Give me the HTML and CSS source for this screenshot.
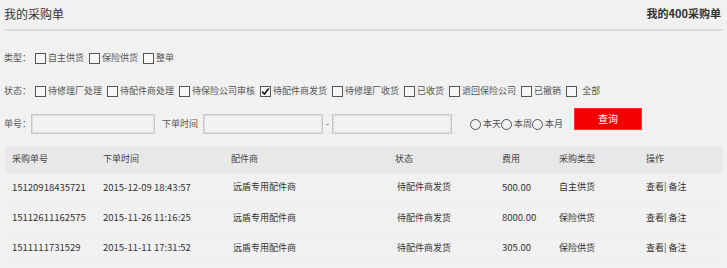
FILE: index.html
```html
<!DOCTYPE html>
<html lang="zh-CN">
<head>
    <meta charset="UTF-8">
    <title>我的采购单</title>
    <link rel="stylesheet" href="styles.css">
</head>
<body>
<div class="page">
    <div class="head">
        <h2>我的采购单</h2>
        <a class="link-400" href="javascript:;">我的400采购单</a>
    </div>

    <div class="row row-type">
        <span class="lbl">类型：</span>
        <label class="chk"><span class="box"></span>自主供货</label>
        <label class="chk"><span class="box"></span>保险供货</label>
        <label class="chk"><span class="box"></span>整单</label>
    </div>

    <div class="row row-state">
        <span class="lbl">状态：</span>
        <label class="chk"><span class="box"></span>待修理厂处理</label>
        <label class="chk"><span class="box"></span>待配件商处理</label>
        <label class="chk"><span class="box"></span>待保险公司审核</label>
        <label class="chk"><span class="box on"><svg width="9" height="9" viewBox="0 0 9 9"><path d="M1.2 4.6 L3.4 7 L7.8 1.6" fill="none" stroke="#111" stroke-width="1.6"/></svg></span>待配件商发货</label>
        <label class="chk"><span class="box"></span>待修理厂收货</label>
        <label class="chk"><span class="box"></span>已收货</label>
        <label class="chk"><span class="box"></span>退回保险公司</label>
        <label class="chk"><span class="box"></span>已撤销</label>
        <label class="chk chk-all"><span class="box"></span>全部</label>
    </div>

    <div class="row row-search">
        <span class="lbl">单号：</span>
        <input class="f-text f-no" type="text">
        <span class="lbl lbl-time">下单时间</span>
        <input class="f-text f-date" type="text">
        <span class="dash">-</span>
        <input class="f-text f-date" type="text">
        <div class="radios">
            <label class="rad"><span class="circle"></span>本天</label>
            <label class="rad"><span class="circle"></span>本周</label>
            <label class="rad"><span class="circle"></span>本月</label>
        </div>
        <a class="btn-query" href="javascript:;">查询</a>
    </div>

    <table class="list">
        <colgroup>
            <col style="width:91px">
            <col style="width:128px">
            <col style="width:164px">
            <col style="width:107px">
            <col style="width:57px">
            <col style="width:87px">
            <col style="width:84px">
        </colgroup>
        <thead>
        <tr>
            <th>采购单号</th>
            <th>下单时间</th>
            <th>配件商</th>
            <th>状态</th>
            <th>费用</th>
            <th>采购类型</th>
            <th>操作</th>
        </tr>
        </thead>
        <tbody>
        <tr>
            <td class="num">15120918435721</td>
            <td class="num">2015-12-09 18:43:57</td>
            <td class="ind">远盾专用配件商</td>
            <td class="ind">待配件商发货</td>
            <td class="num">500.00</td>
            <td>自主供货</td>
            <td><a href="javascript:;">查看</a>| <a href="javascript:;">备注</a></td>
        </tr>
        <tr>
            <td class="num">15112611162575</td>
            <td class="num">2015-11-26 11:16:25</td>
            <td class="ind">远盾专用配件商</td>
            <td class="ind">待配件商发货</td>
            <td class="num">8000.00</td>
            <td>保险供货</td>
            <td><a href="javascript:;">查看</a>| <a href="javascript:;">备注</a></td>
        </tr>
        <tr>
            <td class="num">1511111731529</td>
            <td class="num">2015-11-11 17:31:52</td>
            <td class="ind">远盾专用配件商</td>
            <td class="ind">待配件商发货</td>
            <td class="num">305.00</td>
            <td>保险供货</td>
            <td><a href="javascript:;">查看</a>| <a href="javascript:;">备注</a></td>
        </tr>
        </tbody>
    </table>
</div>
</body>
</html>
```

FILE: styles.css
```css
*{
    margin : 0;
    padding: 0;
    box-sizing: border-box;
}
html, body{
    background: #f1f1f1;
}
body{
    font: 9px/1.4 "Noto Sans CJK SC", "Noto Sans", sans-serif;
    color: #555;
    width: 727px;
    height: 268px;
    overflow: hidden;
}
a{
    color: #333;
    text-decoration: none;
}
.page{
    padding: 0 4px;
}
.head{
    display: flex;
    justify-content: space-between;
    align-items: center;
    height: 31px;
    border-bottom: 2px solid #dcdcdc;
    padding-bottom: 1px;
}
.head h2{
    font-size: 12px;
    font-weight: 400;
    color: #333;
}
.head .link-400{
    font-size: 11px;
    font-weight: 700;
    color: #333;
    margin-right: 2px;
}
.row{
    display: flex;
    align-items: center;
}
.row-type{
    height: 33px;
    margin-top: 11px;
}
.row-state{
    height: 33px;
}
.lbl{
    width: 31px;
    white-space: nowrap;
}
.chk{
    display: flex;
    align-items: center;
    margin-right: 5px;
    white-space: nowrap;
}
.chk .box{
    display: inline-flex;
    align-items: center;
    justify-content: center;
    width: 11px;
    height: 11px;
    border: 1px solid #555;
    background: #f7f7f7;
    margin-right: 2px;
}
.chk-all .box{
    margin-right: 5px;
}
.row-search{
    height: 26px;
    margin-top: 3px;
}
.f-text{
    height: 20px;
    border: 1px solid #c6c6c6;
    box-shadow: inset 0 0 0 1px #e0e0e0;
    background: #f1f1f1;
    outline: none;
}
.f-no{
    width: 124px;
    margin-left: -4px;
}
.lbl-time{
    width: auto;
    margin: 0 5px 0 7px;
}
.f-date{
    width: 120px;
}
.dash{
    width: 9px;
    text-align: center;
}
.radios{
    display: flex;
    align-items: center;
    margin-left: 18px;
}
.rad{
    display: flex;
    align-items: center;
    white-space: nowrap;
}
.rad .circle{
    width: 11px;
    height: 11px;
    border: 1px solid #555;
    border-radius: 50%;
    margin-right: 2px;
}
.btn-query{
    align-self: flex-start;
    display: block;
    width: 68px;
    height: 22px;
    line-height: 20px;
    margin-left: 11px;
    background: #f40000;
    border: 1px solid #ff3030;
    color: #fff;
    text-align: center;
    font-size: 10px;
    margin-top: -3px;
}
.list{
    margin: 9px 0 0 1px;
    width: 718px;
    border-collapse: collapse;
    table-layout: fixed;
    color: #333;
}
.list th{
    height: 27px;
    background: #e8e8e8;
    font-weight: 400;
    text-align: left;
    padding-left: 7px;
    color: #444;
}
.list td{
    height: 30px;
    text-align: left;
    padding-left: 7px;
    white-space: nowrap;
    border-bottom: 1px solid #ededed;
}
.list td.num{
    font-size: 9.5px;
}
.list td.ind{
    padding-left: 9px;
}
```
